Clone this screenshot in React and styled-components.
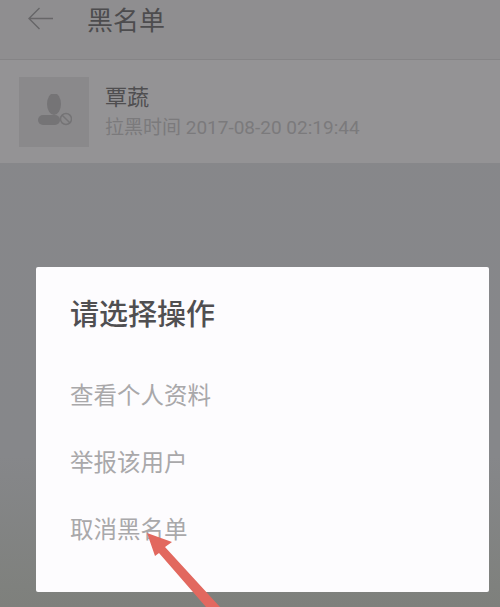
import styled, { createGlobalStyle } from "styled-components";

const GlobalStyle = createGlobalStyle`
  html, body {
    margin: 0;
    padding: 0;
    background: #858688;
    font-family: "Noto Sans CJK SC", "Roboto", sans-serif;
  }
`;

const Page = styled.div`
  position: relative;
  width: 500px;
  height: 607px;
  overflow: hidden;
  background: linear-gradient(180deg, #87878a 0%, #86878a 75%, #7e807c 100%);
`;

const Header = styled.div`
  height: 60px;
  box-sizing: border-box;
  display: flex;
  align-items: center;
  padding: 0 0 22px 27px;
  background: #8f8e90;
  border-bottom: 1px solid #858486;
`;

const Title = styled.div`
  margin-left: 33px;
  font-size: 26px;
  line-height: 36px;
  color: #4d4c4e;
`;

const Row = styled.div`
  height: 103px;
  box-sizing: border-box;
  display: flex;
  align-items: flex-start;
  padding: 17px 0 0 19px;
  background: #949395;
`;

const Avatar = styled.div`
  width: 70px;
  height: 70px;
  display: flex;
  align-items: center;
  justify-content: center;
  background: #8a898b;
`;

const Info = styled.div`
  margin-left: 16px;
  display: flex;
  flex-direction: column;
`;

const Name = styled.div`
  font-size: 22px;
  line-height: 32px;
  margin-top: 2px;
  color: #4f4e50;
`;

const Meta = styled.div`
  font-family: "Roboto", "Noto Sans CJK SC", sans-serif;
  font-size: 19px;
  line-height: 26px;
  margin-top: 4px;
  color: #7b7a7c;
`;

const Dialog = styled.div`
  position: absolute;
  left: 36px;
  top: 267px;
  width: 453px;
  height: 325px;
  box-sizing: border-box;
  padding: 25px 34px 0;
  background: #fdfcfe;
  border-radius: 2px;
`;

const DialogTitle = styled.div`
  font-size: 29px;
  line-height: 40px;
  font-weight: 500;
  color: #504f51;
  margin-bottom: 45px;
`;

const Option = styled.div`
  font-size: 23.5px;
  line-height: 34px;
  color: #a9a8aa;
  margin-bottom: 33px;
`;

const Arrow = styled.svg`
  position: absolute;
  left: 140px;
  top: 525px;
`;

function AvatarIcon() {
  return (
    <svg width="36" height="36" viewBox="0 0 36 36">
      <ellipse cx="18" cy="10" rx="7" ry="11" fill="#757476" />
      <rect x="2" y="21" width="22" height="10" rx="5" fill="#757476" />
      <circle cx="30" cy="25" r="5.5" fill="#8a898b" stroke="#757476" strokeWidth="1.5" />
      <path d="M26.2 21.2L33.8 28.8" stroke="#757476" strokeWidth="1.5" />
    </svg>
  );
}

export default function App() {
  return (
    <>
      <GlobalStyle />
      <Page>
        <Header>
          <svg width="27" height="24" viewBox="0 0 27 24" fill="none">
            <path d="M26 11.5H2M12.5 1L2 11.5L12.5 22" stroke="#676668" strokeWidth="1.4" />
          </svg>
          <Title>黑名单</Title>
        </Header>
        <Row>
          <Avatar>
            <AvatarIcon />
          </Avatar>
          <Info>
            <Name>覃蔬</Name>
            <Meta>拉黑时间 2017-08-20 02:19:44</Meta>
          </Info>
        </Row>
        <Dialog>
          <DialogTitle>请选择操作</DialogTitle>
          <Option>查看个人资料</Option>
          <Option>举报该用户</Option>
          <Option>取消黑名单</Option>
        </Dialog>
        <Arrow width="90" height="82" viewBox="0 0 90 82">
          <path d="M7 8L32 17L25 22L80 82H66L19 28L15 31Z" fill="#e2685f" />
        </Arrow>
      </Page>
    </>
  );
}
